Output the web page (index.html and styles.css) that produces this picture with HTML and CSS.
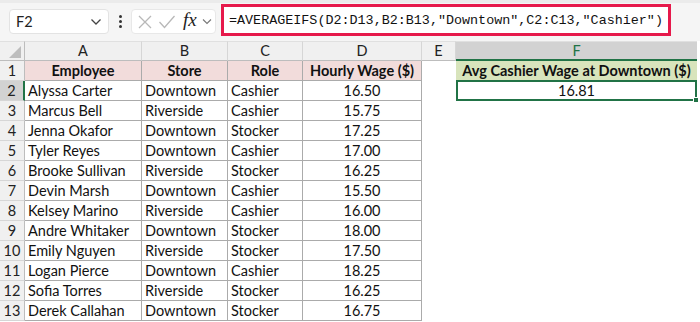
FILE: index.html
```html
<!DOCTYPE html>
<html>
<head>
<meta charset="utf-8">
<link rel="stylesheet" href="styles.css">
</head>
<body>
<div class="app">
  <div class="toolbar">
    <div class="namebox">
      <span class="ref">F2</span>
      <svg class="chev" width="12" height="8" viewBox="0 0 12 8"><polyline points="1.5,1.5 6,6 10.5,1.5" fill="none" stroke="#444" stroke-width="1.3"/></svg>
    </div>
    <div class="dots"><span></span><span></span><span></span></div>
    <div class="fxbox">
      <svg width="16" height="16" viewBox="0 0 16 16"><path d="M2 2 L14 14 M14 2 L2 14" stroke="#b8b8b8" stroke-width="1.3" fill="none"/></svg>
      <svg width="18" height="16" viewBox="0 0 18 16"><polyline points="1.5,8 6.5,13.5 16.5,2" stroke="#b8b8b8" stroke-width="1.3" fill="none"/></svg>
      <span class="fx">fx</span>
      <svg width="10" height="7" viewBox="0 0 10 7"><polyline points="1,1.5 5,5.5 9,1.5" fill="none" stroke="#777" stroke-width="1.1"/></svg>
    </div>
    <div class="formula">=AVERAGEIFS(D2:D13,B2:B13,"Downtown",C2:C13,"Cashier")</div>
    <div class="tail"></div>
  </div>
  <div class="sheet">
    <div class="corner"><svg width="25" height="20" viewBox="0 0 25 20"><polygon points="21,4 21,16 9,16" fill="#bdbdbd"/></svg></div>
    <div class="ch">A</div><div class="ch">B</div><div class="ch">C</div><div class="ch">D</div><div class="ch">E</div><div class="ch sel">F</div>

    <div class="rh">1</div>
    <div class="c hd">Employee</div><div class="c hd">Store</div><div class="c hd">Role</div><div class="c hd">Hourly Wage ($)</div><div class="e"></div><div class="c hdg">Avg Cashier Wage at Downtown ($)</div>

    <div class="rh rsel">2</div>
    <div class="c">Alyssa Carter</div><div class="c">Downtown</div><div class="c">Cashier</div><div class="c n">16.50</div><div class="e"></div><div class="c n active">16.81<span class="handle"></span></div>

    <div class="rh">3</div>
    <div class="c">Marcus Bell</div><div class="c">Riverside</div><div class="c">Cashier</div><div class="c n">15.75</div><div class="e"></div><div class="e"></div>

    <div class="rh">4</div>
    <div class="c">Jenna Okafor</div><div class="c">Downtown</div><div class="c">Stocker</div><div class="c n">17.25</div><div class="e"></div><div class="e"></div>

    <div class="rh">5</div>
    <div class="c">Tyler Reyes</div><div class="c">Downtown</div><div class="c">Cashier</div><div class="c n">17.00</div><div class="e"></div><div class="e"></div>

    <div class="rh">6</div>
    <div class="c">Brooke Sullivan</div><div class="c">Riverside</div><div class="c">Stocker</div><div class="c n">16.25</div><div class="e"></div><div class="e"></div>

    <div class="rh">7</div>
    <div class="c">Devin Marsh</div><div class="c">Downtown</div><div class="c">Cashier</div><div class="c n">15.50</div><div class="e"></div><div class="e"></div>

    <div class="rh">8</div>
    <div class="c">Kelsey Marino</div><div class="c">Riverside</div><div class="c">Cashier</div><div class="c n">16.00</div><div class="e"></div><div class="e"></div>

    <div class="rh">9</div>
    <div class="c">Andre Whitaker</div><div class="c">Downtown</div><div class="c">Stocker</div><div class="c n">18.00</div><div class="e"></div><div class="e"></div>

    <div class="rh">10</div>
    <div class="c">Emily Nguyen</div><div class="c">Riverside</div><div class="c">Stocker</div><div class="c n">17.50</div><div class="e"></div><div class="e"></div>

    <div class="rh">11</div>
    <div class="c">Logan Pierce</div><div class="c">Downtown</div><div class="c">Cashier</div><div class="c n">18.25</div><div class="e"></div><div class="e"></div>

    <div class="rh">12</div>
    <div class="c">Sofia Torres</div><div class="c">Riverside</div><div class="c">Stocker</div><div class="c n">16.25</div><div class="e"></div><div class="e"></div>

    <div class="rh">13</div>
    <div class="c">Derek Callahan</div><div class="c">Downtown</div><div class="c">Stocker</div><div class="c n">16.75</div><div class="e"></div><div class="e"></div>
  </div>
</div>
</body>
</html>
```
FILE: styles.css
```css
* { box-sizing: border-box; }
html, body { margin: 0; padding: 0; background: #fff; }
body { width: 700px; height: 322px; overflow: hidden; font-family: Lato, "Liberation Sans", sans-serif; color: #111; }
.app { display: flex; flex-direction: column; }

.toolbar {
  height: 41px;
  background: #f5f5f5;
  border-top: 3px solid #ebebeb;
  display: flex;
  align-items: flex-start;
  padding-left: 9px;
}
.namebox {
  margin-top: 6px;
  width: 100px; height: 25px;
  background: #fff;
  border: 1px solid #e3e3e3;
  border-radius: 4px;
  display: flex; align-items: center; justify-content: space-between;
  padding: 0 6px 0 6px;
  font-size: 14.5px;
}
.namebox .ref { color: #222; }
.dots {
  width: 22px; height: 25px; margin-top: 6px;
  display: flex; flex-direction: column; align-items: center; justify-content: center; gap: 2px;
}
.dots span { width: 3px; height: 3px; background: #333; border-radius: 50%; }
.fxbox {
  margin-top: 6px;
  width: 85px; height: 25px;
  background: #fff;
  border: 1px solid #e8e8e8;
  border-radius: 4px;
  display: flex; align-items: center; gap: 5px;
  padding-left: 5px;
}
.fx { font-family: "Liberation Serif", serif; font-style: italic; font-size: 19px; color: #222; margin-left: 2px; margin-top: -3px; }
.formula {
  margin-left: 5px;
  margin-top: 1px;
  width: 450px; height: 32px;
  background: #fff;
  border: 3px solid #e6194b;
  font-family: "Liberation Mono", monospace;
  font-size: 13.4px;
  color: #111;
  display: flex; align-items: center;
  padding-left: 5px;
}
.tail { flex: 1; height: 38px; }

.sheet {
  display: grid;
  grid-template-columns: 25px 117px 86px 75px 119px 34px 241px;
  grid-auto-rows: 20px;
  font-size: 14.5px;
}
.corner { background: #f0f0f0; border-right: 1px solid #bdbdbd; border-bottom: 1px solid #bdbdbd; border-top: 1px solid #e0e0e0; }
.corner svg { display: block; }
.ch {
  background: #f0f0f0;
  border-right: 1px solid #d6d6d6;
  border-bottom: 1px solid #bdbdbd;
  border-top: 1px solid #e0e0e0;
  text-align: center;
  line-height: 18px;
  color: #222;
}
.ch.sel { background: #d2d2d2; color: #217346; border-bottom: 2px solid #217346; border-right: none; }
.rh {
  background: #f0f0f0;
  border-right: 1px solid #bdbdbd;
  border-bottom: 1px solid #d6d6d6;
  text-align: center;
  line-height: 19px;
  color: #222;
}
.rh.rsel { background: #d2d2d2; border-right: 2px solid #217346; }
.c {
  border-right: 1px solid #ababab;
  border-bottom: 1px solid #ababab;
  padding-left: 3px;
  line-height: 19px;
  white-space: nowrap;
  overflow: hidden;
}
.c.n { text-align: center; padding-left: 0; }
.hd { background: #f2dcdb; font-weight: bold; text-align: center; padding-left: 0; }
.hdg { background: #d8e4bc; font-weight: bold; text-align: center; padding-left: 0; border-right: none; }
.e { background: #fff; }
.active {
  position: relative;
  border: 2px solid #217346;
  margin-top: -1px; height: 21px;
  line-height: 17px;
  overflow: visible;
}
.handle {
  position: absolute; right: -4px; bottom: -4px;
  width: 6px; height: 6px; background: #217346; border: 1px solid #fff;
}
```
